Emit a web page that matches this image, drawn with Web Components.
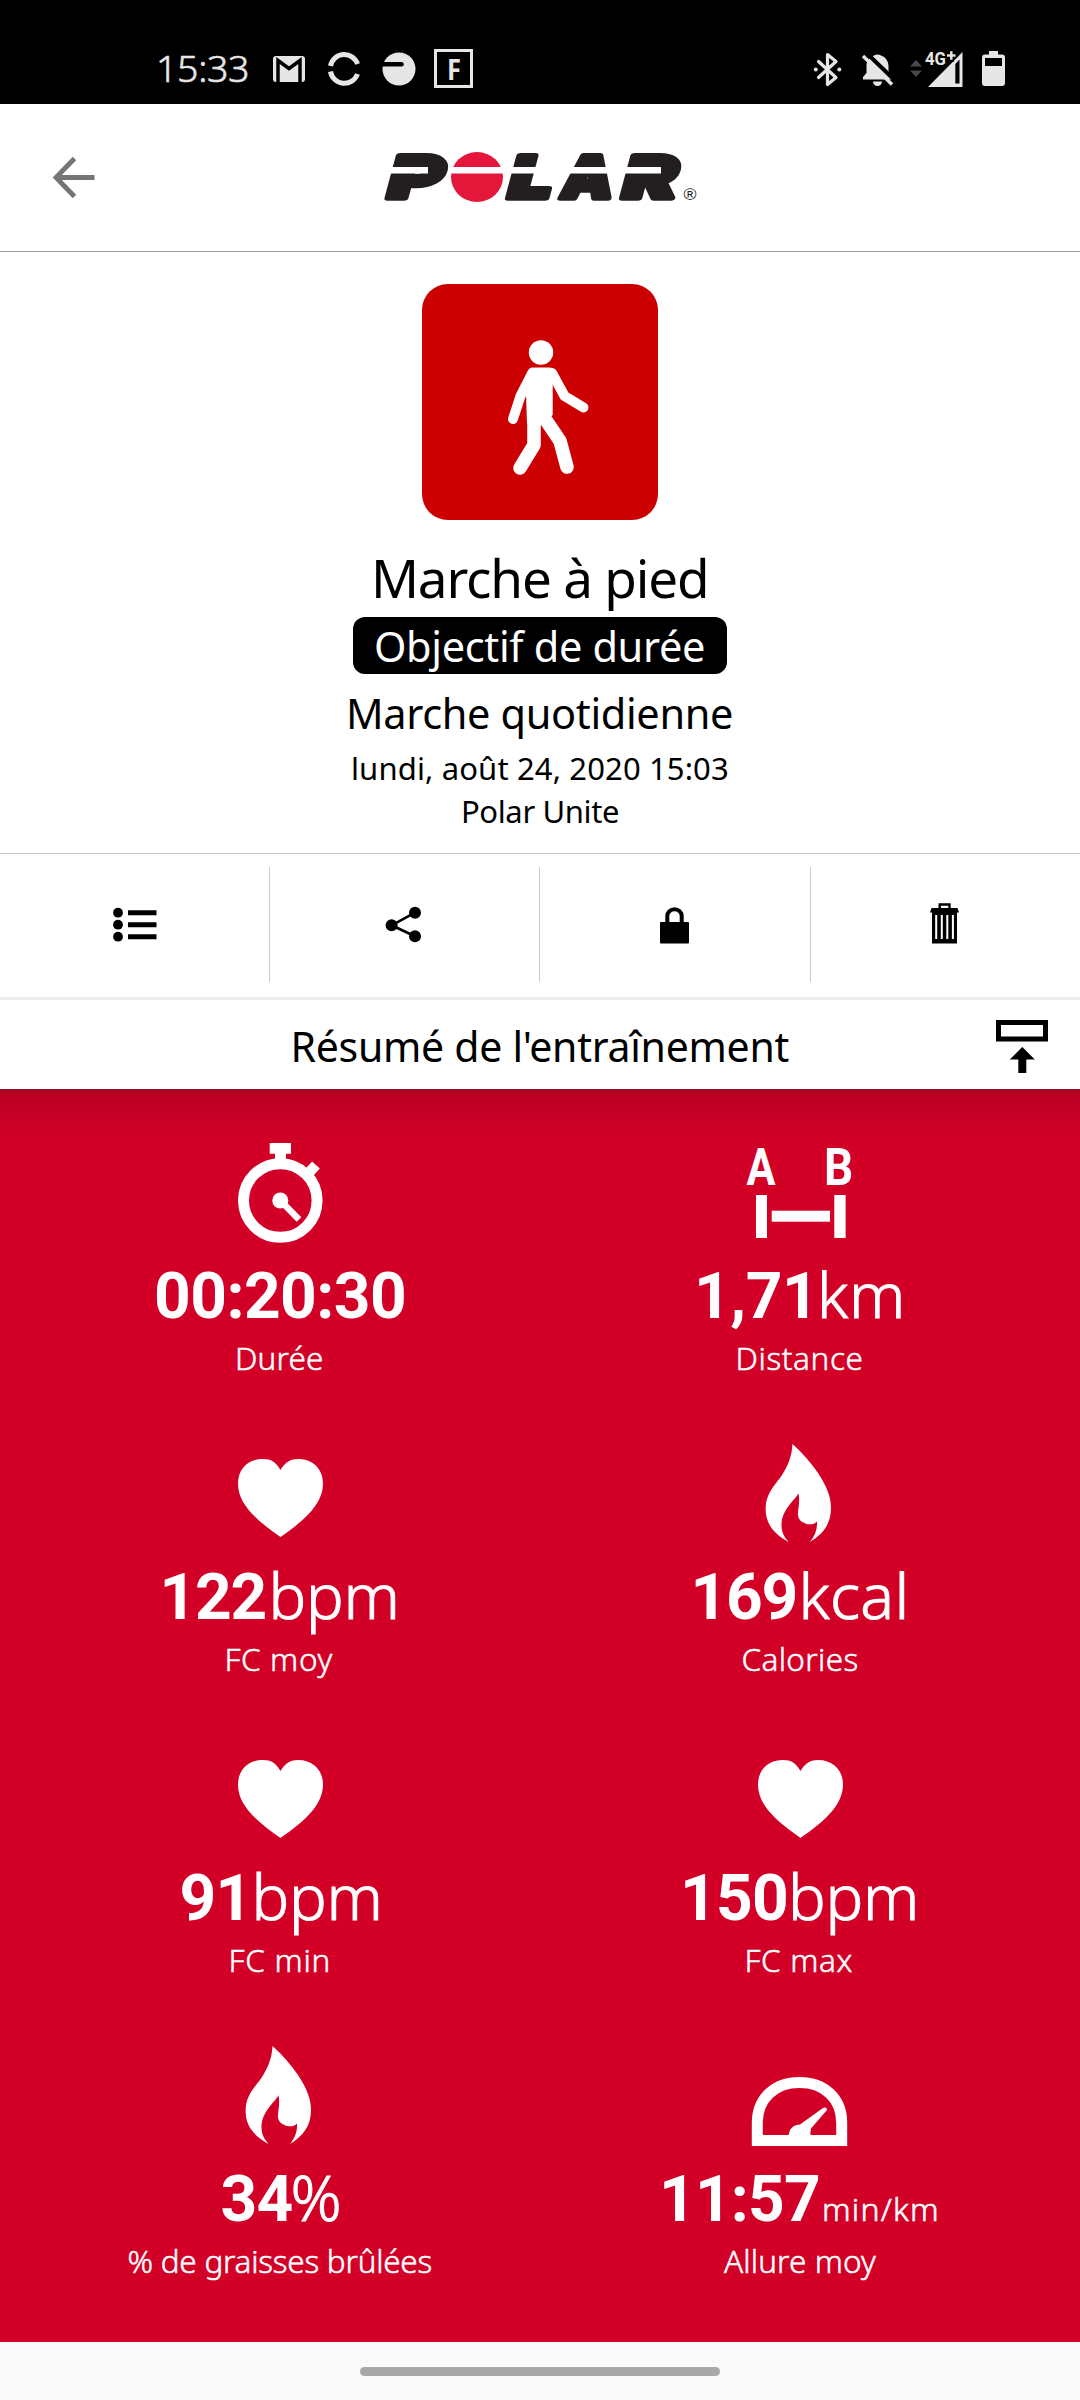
<!DOCTYPE html>
<html lang="fr">
<head>
<meta charset="utf-8">
<title>Polar – Résumé de l'entraînement</title>
<style>
html,body{margin:0;padding:0;background:#fff}
body{width:1080px;height:2400px;overflow:hidden;font-family:"Noto Sans",sans-serif;color:#000}
</style>
</head>
<body>
<polar-app></polar-app>
<script>
const make = (name, html, setup) => {
  const t = document.createElement('template');
  t.innerHTML = html;
  customElements.define(name, class extends HTMLElement {
    connectedCallback() {
      if (this.shadowRoot) return;
      this.attachShadow({mode: 'open'}).appendChild(t.content.cloneNode(true));
      if (setup) setup(this, this.shadowRoot);
    }
  });
};

/* One line of text whose tracking is set so that its ink is `w` pixels wide. */
const ctx = document.createElement('canvas').getContext('2d');
customElements.define('fit-text', class extends HTMLElement {
  connectedCallback() {
    if (this.shadowRoot) return;
    const root = this.attachShadow({mode: 'open'});
    root.innerHTML = '<style>:host{display:block;white-space:pre;width:max-content}span{display:inline-block}</style><span><slot></slot></span>';
    const s = getComputedStyle(this), text = this.textContent, span = root.querySelector('span');
    ctx.font = `${s.fontWeight} ${s.fontSize} ${s.fontFamily}`;
    const m = ctx.measureText(text);
    const ink = m.actualBoundingBoxRight + m.actualBoundingBoxLeft;
    const ls = (Number(this.getAttribute('w')) - ink) / Math.max(1, text.length - 1);
    span.style.letterSpacing = ls + 'px';
    span.style.marginLeft = m.actualBoundingBoxLeft + 'px';
    span.style.marginRight = (m.actualBoundingBoxRight - m.width - ls) + 'px';
  }
});

make('status-bar', `
<style>
:host{display:flex;height:104px;background:#000;color:#e6e6e6;box-sizing:border-box;padding:34px 75px 0 159px;justify-content:space-between}
div{display:flex;height:70px}
fit-text{font-size:37.5px;font-weight:300;line-height:70px;height:70px;margin-top:-1px;-webkit-text-stroke:.6px currentColor}
svg{display:block}
</style>
<div><fit-text w="88">15:33</fit-text>
<svg width="210" height="70" viewBox="263 34 210 70" style="margin-left:16px">
 <rect x="273" y="56" width="32" height="26" rx="3" fill="#e6e6e6"/><path d="M278 82V60.500L289 68.500L300 60.500V82" fill="none" stroke="#000" stroke-width="3.500"/><path d="M280 82V65.500L289 71.500L298 65.500V82Z" fill="#e6e6e6"/>
 <path d="M330.500 66A14 14 0 0 1 357.500 64" fill="none" stroke="#e6e6e6" stroke-width="5"/><path d="M330.500 71.500A14 14 0 0 0 357.500 74" fill="none" stroke="#e6e6e6" stroke-width="5"/>
 <circle cx="399" cy="69" r="16.500" fill="#e6e6e6"/><path d="M381 64.200H401.500" stroke="#000" stroke-width="4.500" stroke-linecap="round"/>
 <rect x="435.500" y="50.500" width="36" height="36" fill="none" stroke="#e6e6e6" stroke-width="3"/>
 <text x="447" y="80" font-family="Noto Sans" font-weight="700" font-size="29" fill="#e6e6e6" textLength="14" lengthAdjust="spacingAndGlyphs">F</text>
</svg></div>
<div><svg width="195" height="70" viewBox="810 34 195 70">
 <g fill="none" stroke="#e6e6e6" stroke-width="3.200" stroke-linejoin="round"><path d="M818.500 61.500L836 77.500L827.500 84.500V54.500L836 61.500L818.500 77.500" stroke-linecap="round"/></g>
 <circle cx="815.800" cy="69.500" r="2" fill="#e6e6e6"/><circle cx="839.300" cy="69.500" r="2" fill="#e6e6e6"/>
 <path d="M863 79.500V77L866.500 73V66C866.500 60 870.500 56.500 874 55.500Q877.500 53.500 881 55.500C885.500 57 888.500 61 888.500 66V73L892 77V79.500Z" fill="#e6e6e6"/><path d="M873 81.500H882A4.500 4.500 0 0 1 873 81.500Z" fill="#e6e6e6"/>
 <path d="M866 52.500L896 81.500" stroke="#000" stroke-width="4"/><path d="M863 56L892 84.500" stroke="#e6e6e6" stroke-width="3.400"/>
 <path d="M910 66.500L916 60L922 66.500ZM910 70.500L916 77L922 70.500Z" fill="#484848"/>
 <path d="M928 87L962.500 52V87Z" fill="#e6e6e6"/><path d="M955.300 64L959.500 59.500V83.500H955.300Z" fill="#000"/>
 <path d="M946 55.500h10.500M951.300 50v12" stroke="#000" stroke-width="5"/>
 <text x="925" y="65" font-family="Roboto" font-weight="700" font-size="17.500" fill="#e6e6e6" textLength="21" lengthAdjust="spacingAndGlyphs">4G</text>
 <path d="M947 55.500h8.500M951.300 51.300v8.500" stroke="#e6e6e6" stroke-width="2.500"/>
 <path d="M989 54.500V51H998V54.500H1002Q1005 54.500 1005 57.500V83Q1005 86 1002 86H985Q982 86 982 83V57.500Q982 54.500 985 54.500Z" fill="#e6e6e6"/><rect x="985" y="58" width="17" height="8" fill="#000"/>
</svg></div>`);

make('app-header', `
<style>
:host{display:grid;grid-template-columns:1fr 330px 1fr;height:148px;box-sizing:border-box;border-bottom:1px solid #a0a0a0;align-items:start}
svg{display:block;margin-top:26px}
svg.back{margin-left:45px}
</style>
<svg class="back" width="60" height="96" viewBox="45 130 60 96"><path d="M94.500 177.500H57M74.500 158.500L56 177.500L74.500 196.500" fill="none" stroke="#757575" stroke-width="4.800"/></svg>
<svg width="330" height="96" viewBox="375 130 330 96">
 <g font-family="Inter" font-weight="900" font-size="58" fill="#231f20" stroke="#231f20" stroke-width="5.500" stroke-linejoin="round">
  <text transform="translate(384.500 198) skewX(-15)" textLength="54" lengthAdjust="spacingAndGlyphs">P</text>
  <text transform="translate(505 198) skewX(-15)" textLength="43" lengthAdjust="spacingAndGlyphs">L</text>
  <text transform="translate(559 198) skewX(-10)" textLength="51" lengthAdjust="spacingAndGlyphs">A</text>
  <text transform="translate(619 198) skewX(-15)" textLength="53.500" lengthAdjust="spacingAndGlyphs">R</text>
 </g>
 <path d="M380 170.200H428M500 170.200H616M625 170.200H661" stroke="#fff" stroke-width="6.500"/>
 <ellipse cx="477" cy="177" rx="26" ry="25" fill="#e4173a"/><path d="M448 170.200H506" stroke="#fff" stroke-width="6.500"/>
 <text x="683.500" y="200" font-family="Liberation Sans" font-size="16" fill="#231f20" textLength="13" lengthAdjust="spacingAndGlyphs">®</text>
</svg>
<span></span>`);

make('session-info', `
<style>
:host{display:flex;flex-direction:column;align-items:center;height:602px;box-sizing:border-box;padding-top:32px;border-bottom:1px solid #c8c8c8}
.tile{width:236px;height:236px;border-radius:26px;background:#c00;display:block}
fit-text{display:block}
.t,.q,.d{padding-left:2px}
.t{font-size:53px;line-height:72px;margin-top:22px}
.p{background:#000;color:#fff;border-radius:12px;width:374px;height:57px;display:flex;justify-content:center;margin-top:3px}
.p fit-text,.q{font-size:41.500px;line-height:57px}
.p fit-text{line-height:59px}
.q{margin-top:11px}
.d{font-size:31px;line-height:43px}
</style>
<svg class="tile" viewBox="0 0 236 236"><g fill="none" stroke="#fff" stroke-linecap="round" stroke-linejoin="round">
 <circle cx="119" cy="68.500" r="12.200" fill="#fff" stroke="none"/>
 <path d="M110.500 88.500L98.500 112L91 135" stroke-width="10"/><path d="M130 89L142.500 112L161.500 123.500" stroke-width="10"/>
 <path d="M112 134V161L98 184" stroke-width="13.600"/><path d="M122.500 134L138 157L145 183" stroke-width="13.600"/></g>
 <path d="M105.500 90Q108 83.500 113 83.500H127Q132 83.500 135 89L130.700 100V131L119.700 141L105 140L104 110Z" fill="#fff"/></svg>
<fit-text class="t" w="330">Marche à pied</fit-text>
<div class="p"><fit-text w="328">Objectif de durée</fit-text></div>
<fit-text class="q" w="382">Marche quotidienne</fit-text>
<fit-text class="d" w="374" style="margin-top:5px;padding:0">lundi, août 24, 2020 15:03</fit-text>
<fit-text class="d" w="154">Polar Unite</fit-text>`);

make('action-bar', `
<style>
:host{display:flex;height:146px;box-sizing:border-box;padding:13px 0 15px;border-bottom:3px solid #eee;align-items:stretch}
div{flex:1;display:flex;align-items:center;justify-content:center;box-sizing:border-box}
div+div{border-left:1px solid #ccc;padding-right:1px}
svg{width:60px;height:60px;display:block}
</style>
<div><svg viewBox="105 895 60 60"><g><circle cx="119" cy="912.700" r="4.900"/><circle cx="119" cy="924.700" r="4.900"/><circle cx="119" cy="936.700" r="4.900"/><path d="M129 912.700H157.500M129 924.700H157.500M129 936.700H157.500" stroke="#000" stroke-width="5"/></g></svg></div>
<div><svg viewBox="375 895 60 60"><circle cx="416" cy="912.700" r="6"/><circle cx="392.600" cy="925.300" r="6"/><circle cx="416" cy="936.300" r="6"/><path d="M416 912.700L392.600 925.300L416 936.300" fill="none" stroke="#000" stroke-width="2.600"/></svg></div>
<div><svg viewBox="645 895 60 60"><rect x="661" y="922" width="29" height="21.500" rx="1"/><path d="M668.300 923V916A7.200 6.700 0 0 1 682.700 916V923" fill="none" stroke="#000" stroke-width="4"/></svg></div>
<div><svg viewBox="915 895 60 60"><path d="M939.700 908V904.500H949.500V908" fill="none" stroke="#000" stroke-width="2.400"/><path d="M931.500 908H957.500L959 912.500H930Z"/><path d="M932 912H957V943.500H932Z"/><path d="M936.200 915V939M941.800 915V939M947.300 915V939M952.900 915V939" stroke="#fff" stroke-width="2"/></svg></div>`);

make('section-title', `
<style>
:host{display:grid;grid-template-columns:1fr auto 1fr;height:89px;align-items:start}
fit-text{font-size:41px;line-height:56px;margin-top:18px;grid-column:2;padding-left:2px}
svg{display:block;justify-self:end;margin-right:27px;margin-top:16px}
</style>
<fit-text w="495">Résumé de l'entraînement</fit-text>
<svg width="60" height="62" viewBox="993 1017 60 62"><rect x="998.500" y="1023.500" width="47" height="16.500" fill="none" stroke="#000" stroke-width="5"/><path d="M1022.300 1048L1034.800 1060.500H1026.300V1074H1018.300V1060.500H1009.800Z"/></svg>`);

const ICONS = {
  watch: '<g fill="none" stroke="#fff"><circle cx="50.300" cy="57.500" r="36.800" stroke-width="11"/><path d="M50.300 57.500L69 76.500" stroke-width="6.500"/><path d="M76 33L86 22" stroke-width="10.500"/></g><circle cx="50.300" cy="57.500" r="8" fill="#fff"/><path d="M39.700 0H61V10.700H56V18H45V10.700H39.700Z" fill="#fff"/>',
  ab: '<g fill="#fff"><text transform="translate(-3.400 42) scale(.83 1)" font-family="Roboto" font-weight="700" font-size="52">A</text><text transform="translate(74 42) scale(.88 1)" font-family="Roboto" font-weight="700" font-size="52">B</text><rect x="6" y="52" width="11" height="43"/><rect x="84.300" y="52" width="11.300" height="43"/><rect x="21.700" y="67.700" width="58.300" height="11"/></g>',
  heart: '<path fill="#fff" d="M50.500 26C55 18 61 15 68 15C83 15 93 25 93 39.500C93 60 75 76 50.500 93C26 76 8 60 8 39.500C8 25 18 15 33 15C41 15 46 18 50.500 26Z"/>',
  flame: '<path fill="#fff" d="M42.500 0C53 9 61 19 68 29C77 43 81 53 81 64C81 80 73 90 60 98C65 92 67.500 85 67 77.500C65 80 62 80.500 58.400 80.300C51 79 47.500 75 48 69C48.500 62 50 57 48.500 49.300C45 56 31.500 66 31.500 81C31.500 88 34 93 38.700 98C22 89 15.600 78 15.600 65C15.600 51 23 43 30 34C37 24 42 13 42.500 0Z"/>',
  gauge: '<path fill="none" stroke="#fff" stroke-width="11" d="M7.300 94.500V77C7.300 52 25 36.500 49.500 36.500S91.700 52 91.700 77V94.500Z"/><path fill="#fff" d="M38.500 91Q39 79 50 78.500L73 62Q77 60.500 77 64L61 82.500Q60 86 60.500 91Z"/>'
};
make('metric-card', `
<style>
:host{display:flex;flex-direction:column;align-items:center;height:301px;color:#fff}
svg{display:block;width:100px;height:100px;overflow:visible}
.v{display:flex;align-items:baseline;justify-content:center;height:80px;line-height:80px;margin-top:14px}
.n{font:700 64px/80px Roboto,sans-serif}
.u{font-size:63px;font-weight:300;line-height:70px;-webkit-text-stroke:1px currentColor}
.small{font-size:32px;line-height:40px;-webkit-text-stroke-width:.6px}
.l{font-size:31.5px;font-weight:300;line-height:44px;margin-top:-1px;-webkit-text-stroke:.5px currentColor}
</style>
<svg viewBox="0 0 100 100"></svg><div class="v"></div>`, (el, root) => {
  root.querySelector('svg').innerHTML = ICONS[el.getAttribute('icon')];
  const a = n => el.getAttribute(n);
  const add = (parent, cls, w, text, gap) => {
    const f = document.createElement('fit-text');
    f.className = cls; f.setAttribute('w', w); f.textContent = text;
    if (gap) f.style.marginLeft = gap + 'px';
    parent.appendChild(f);
  };
  const v = root.querySelector('.v');
  add(v, 'n', a('nw'), a('value'));
  if (a('unit')) add(v, 'u' + (el.hasAttribute('small') ? ' small' : ''), a('uw'), a('unit'), a('gap'));
  add(root, 'l', a('lw'), a('label'));
});

make('metric-grid', `
<style>
:host{display:grid;grid-template-columns:520px 520px;justify-content:center;align-content:start;height:1253px;box-sizing:border-box;padding-top:54px;
background:linear-gradient(#8b1029 0,#b70022 3px,#c00025 14px,#cc0026 34px,#d20027 54px)}
</style>
<metric-card icon="watch" value="00:20:30" nw="248" label="Durée" lw="84"></metric-card>
<metric-card icon="ab" value="1,71" nw="109" unit="km" uw="79" gap="14" label="Distance" lw="123"></metric-card>
<metric-card icon="heart" value="122" nw="101" unit="bpm" uw="122" gap="8" label="FC moy" lw="105"></metric-card>
<metric-card icon="flame" value="169" nw="100" unit="kcal" uw="101" gap="8" label="Calories" lw="115"></metric-card>
<metric-card icon="heart" value="91" nw="60" unit="bpm" uw="122" gap="15" label="FC min" lw="97"></metric-card>
<metric-card icon="heart" value="150" nw="101" unit="bpm" uw="122" gap="7" label="FC max" lw="105"></metric-card>
<metric-card icon="flame" value="34" nw="70" unit="%" uw="49" gap="2" label="% de graisses brûlées" lw="303"></metric-card>
<metric-card icon="gauge" value="11:57" nw="155" unit="min/km" uw="112" gap="5" small label="Allure moy" lw="152"></metric-card>`);

make('nav-bar', `
<style>:host{display:flex;height:58px;background:#fafafa;justify-content:center;align-items:center}
i{display:block;width:360px;height:9px;border-radius:5px;background:#a8a8a8}</style><i></i>`);

make('polar-app', `
<style>:host{display:flex;flex-direction:column;width:1080px;height:2400px;background:#fff}
:host>*{flex:none}</style>
<status-bar></status-bar><app-header></app-header><session-info></session-info><action-bar></action-bar><section-title></section-title><metric-grid></metric-grid><nav-bar></nav-bar>`);
</script>
</body>
</html>
